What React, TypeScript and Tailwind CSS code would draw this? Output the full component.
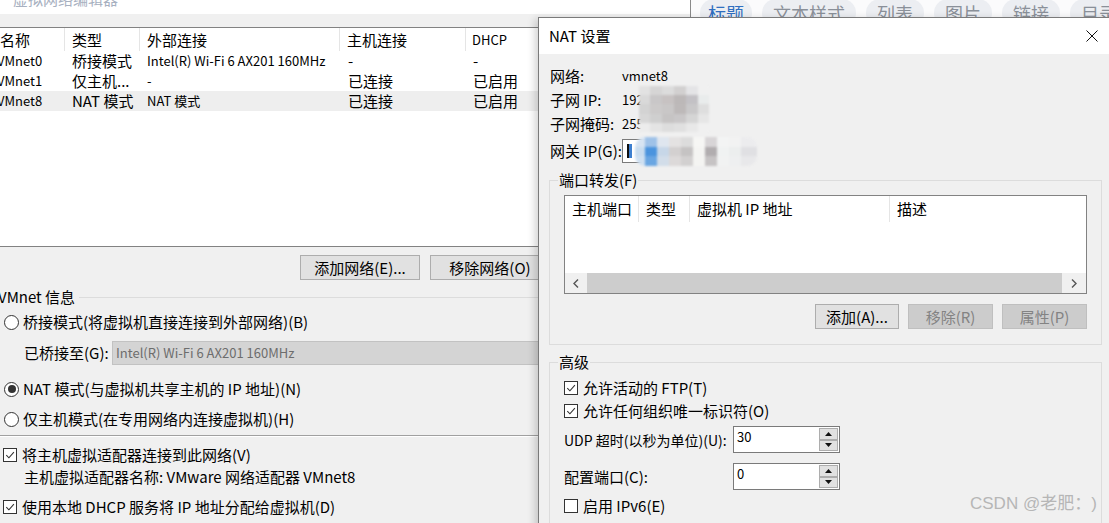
import React from "react";

// small win10-ish controls
const Radio = ({ checked }: { checked?: boolean }) => (
  <span className="w-[15px] h-[15px] rounded-full border border-[#333333] bg-white flex items-center justify-center shrink-0">
    {checked && <span className="w-[8px] h-[8px] rounded-full bg-[#333333]" />}
  </span>
);

const Check = ({ checked }: { checked?: boolean }) => (
  <span className="w-[14px] h-[14px] border border-[#333333] bg-white flex items-center justify-center shrink-0">
    {checked && (
      <svg width="10" height="10" viewBox="0 0 10 10">
        <path d="M1.3 5.2 L3.9 7.8 L8.9 2.2" fill="none" stroke="#333" strokeWidth="1.1" />
      </svg>
    )}
  </span>
);

const WinButton = ({
  children,
  disabled,
  className = "",
}: {
  children: React.ReactNode;
  disabled?: boolean;
  className?: string;
}) => (
  <div
    className={`h-[25px] flex items-center justify-center border shrink-0 ${
      disabled ? "bg-[#cccccc] border-[#bfbfbf] text-[#838383]" : "bg-[#e1e1e1] border-[#adadad]"
    } ${className}`}
  >
    {children}
  </div>
);

const Spin = ({ value }: { value: string }) => (
  <div className="w-[107px] h-[27px] border border-[#7a7a7a] bg-white flex">
    <span className="flex-1 pl-[3px] pt-[2px] text-[13px] leading-[16px]">{value}</span>
    <div className="w-[20px] flex flex-col py-[1px] pr-[1px]">
      <div className="h-[12px] bg-[#e1e1e1] border border-[#adadad] flex items-center justify-center">
        <svg width="7" height="4" viewBox="0 0 7 4">
          <path d="M0 4 L3.5 0 L7 4 Z" fill="#111" />
        </svg>
      </div>
      <div className="h-[12px] bg-[#e1e1e1] border border-[#adadad] flex items-center justify-center">
        <svg width="7" height="4" viewBox="0 0 7 4">
          <path d="M0 0 L3.5 4 L7 0 Z" fill="#111" />
        </svg>
      </div>
    </div>
  </div>
);

const networks = [
  { name: "VMnet0", type: "桥接模式", ext: "Intel(R) Wi-Fi 6 AX201 160MHz", host: "-", dhcp: "-" },
  { name: "VMnet1", type: "仅主机...", ext: "-", host: "已连接", dhcp: "已启用" },
  { name: "VMnet8", type: "NAT 模式", ext: "NAT 模式", host: "已连接", dhcp: "已启用", selected: true },
];

const colW = ["w-[71px]", "w-[75px]", "w-[200px]", "w-[126px]", "w-[120px]"];

const LeftWindow = () => (
  <div className="w-[699px] -ml-[8px] shrink-0 h-full flex flex-col bg-[#f0f0f0] border-r border-[#8a8a8a]">
    <div className="h-[14px] bg-white overflow-hidden">
      <div className="-mt-[10px] pl-[21px] text-[15px] leading-[18px] text-[#a7b0c0]">虚拟网络编辑器</div>
    </div>
    <div className="h-[13px]" />

    {/* network list */}
    <div className="h-[220px] bg-white border-y border-[#828282] pl-[2px]">
      <div className="flex h-[23px]">
        {["名称", "类型", "外部连接", "主机连接", "DHCP"].map((h, i) => (
          <div
            key={h}
            className={`${colW[i]} flex items-center border-r border-[#e5e5e5] ${
              i === 0 ? "pl-[6px]" : i === 4 ? "pl-[6px] text-[13px]" : "pl-[7px]"
            }`}
          >
            {h}
          </div>
        ))}
      </div>
      {networks.map((n) => (
        <div key={n.name} className={`flex h-[20px] items-center ${n.selected ? "bg-[#eeeeee]" : ""}`}>
          <div className={`${colW[0]} pl-[3px] text-[13px]`}>{n.name}</div>
          <div className={`${colW[1]} pl-[7px]`}>{n.type}</div>
          <div className={`${colW[2]} pl-[7px] text-[13px] whitespace-nowrap`}>{n.ext}</div>
          <div className={`${colW[3]} pl-[8px]`}>{n.host}</div>
          <div className={`${colW[4]} pl-[7px]`}>{n.dhcp}</div>
        </div>
      ))}
    </div>

    <div className="mt-[8px] flex gap-[10px] pl-[308px]">
      <WinButton className="w-[120px]">添加网络(E)...</WinButton>
      <WinButton className="w-[120px]">移除网络(O)</WinButton>
    </div>

    {/* VMnet info */}
    <div className="mt-[8px] h-[18px] flex items-center">
      <span className="pl-[6px]">VMnet 信息</span>
      <span className="flex-1 h-px bg-[#dcdcdc] ml-[4px]" />
    </div>
    <div className="mt-[6px] h-[20px] flex items-center gap-[4px] pl-[12px]">
      <Radio />
      <span>桥接模式(将虚拟机直接连接到外部网络)(B)</span>
    </div>
    <div className="mt-[9px] h-[24px] flex items-center pl-[32px] pr-[12px]">
      <span className="w-[88px] shrink-0">已桥接至(G):</span>
      <div className="flex-1 h-full bg-[#d4d4d4] border border-[#c2c2c2] flex items-center pl-[3px] text-[13px] text-[#6d6d6d]">
        Intel(R) Wi-Fi 6 AX201 160MHz
      </div>
    </div>
    <div className="mt-[14px] h-[20px] flex items-center gap-[4px] pl-[12px]">
      <Radio checked />
      <span>NAT 模式(与虚拟机共享主机的 IP 地址)(N)</span>
    </div>
    <div className="mt-[10px] h-[20px] flex items-center gap-[4px] pl-[12px]">
      <Radio />
      <span>仅主机模式(在专用网络内连接虚拟机)(H)</span>
    </div>
    <div className="mt-[6px] h-px bg-[#a0a0a0] border-b border-white box-content" />
    <div className="mt-[8px] h-[20px] flex items-center gap-[5px] pl-[11px]">
      <Check checked />
      <span>将主机虚拟适配器连接到此网络(V)</span>
    </div>
    <div className="mt-[2px] h-[20px] flex items-center pl-[32px]">主机虚拟适配器名称: VMware 网络适配器 VMnet8</div>
    <div className="mt-[10px] h-[20px] flex items-center gap-[5px] pl-[11px]">
      <Check checked />
      <span>使用本地 DHCP 服务将 IP 地址分配给虚拟机(D)</span>
    </div>
  </div>
);

const tabs = ["标题", "文本样式", "列表", "图片", "链接", "目录"];

const BrowserStrip = () => (
  <div className="flex-1 h-[17px] overflow-hidden bg-[#fbfbfc] flex gap-[10px] pl-[9px]">
    {tabs.map((t, i) => (
      <div
        key={t}
        className={`-mt-[1px] h-[28px] shrink-0 rounded-full bg-[#eceef2] flex items-center text-[18px] ${
          i === 0 ? "px-[8px] text-[#2f6fc0]" : "px-[11px] text-[#8a9099]"
        }`}
      >
        {t}
      </div>
    ))}
  </div>
);

const Mosaic = ({ cells, cols, className }: { cells: string[]; cols: string; className: string }) => (
  <div className={`absolute grid ${cols} blur-[1px] ${className}`}>
    {cells.map((c, i) => (
      <div key={i} className={c} />
    ))}
  </div>
);

const NatDialog = () => (
  <div className="absolute left-[538px] top-[17px] w-[577px] h-[520px] border border-[#7a7a7a] bg-[#f0f0f0] shadow-[-3px_2px_8px_rgba(0,0,0,0.18)]">
    <div className="h-[36px] bg-white flex items-center justify-between pl-[10px] pr-[16px]">
      <span className="text-[15px]">NAT 设置</span>
      <svg width="12" height="12" viewBox="0 0 12 12">
        <path d="M0.5 0.5 L11.5 11.5 M11.5 0.5 L0.5 11.5" stroke="#111" strokeWidth="1" />
      </svg>
    </div>

    <div className="pl-[11px] pt-[10px]">
      <div className="h-[24px] flex items-center">
        <span className="w-[72px]">网络:</span>
        <span className="text-[13px]">vmnet8</span>
      </div>
      <div className="h-[24px] flex items-center">
        <span className="w-[72px]">子网 IP:</span>
        <span className="text-[13px]">192</span>
      </div>
      <div className="h-[24px] flex items-center">
        <span className="w-[72px]">子网掩码:</span>
        <span className="text-[13px]">255.2</span>
      </div>
      <div className="mt-[3px] h-[24px] flex items-center">
        <span className="w-[72px]">网关 IP(G):</span>
        <div className="w-[125px] h-full bg-white border border-[#7a7a7a] flex items-center pl-[4px]">
          <span className="w-[5px] h-[14px] bg-[#3c7fd0] border-l-2 border-[#111]" />
        </div>
      </div>
    </div>

    {/* port forwarding */}
    <fieldset className="ml-[10px] mt-[8px] w-[553px] border border-[#dcdcdc]">
      <legend className="ml-[8px] px-[1px] leading-[18px]">端口转发(F)</legend>
      <div className="px-[14px] pt-[6px] pb-[15px]">
        <div className="h-[99px] border border-[#828282] bg-white flex flex-col">
          <div className="h-[26px] flex">
            {[
              ["主机端口", "w-[74px]"],
              ["类型", "w-[51px]"],
              ["虚拟机 IP 地址", "w-[200px]"],
              ["描述", "flex-1"],
            ].map(([t, w], i) => (
              <div
                key={t}
                className={`${w} pl-[7px] flex items-center ${i < 3 ? "border-r border-[#e5e5e5]" : ""}`}
              >
                {t}
              </div>
            ))}
          </div>
          <div className="flex-1" />
          <div className="h-[20px] flex">
            <div className="w-[22px] flex items-center justify-center bg-[#f0f0f0]">
              <svg width="6" height="9" viewBox="0 0 6 9">
                <path d="M5 0.5 L1 4.5 L5 8.5" fill="none" stroke="#555" strokeWidth="1.4" />
              </svg>
            </div>
            <div className="flex-1 bg-[#cdcdcd]" />
            <div className="w-[24px] flex items-center justify-center bg-[#f0f0f0]">
              <svg width="6" height="9" viewBox="0 0 6 9">
                <path d="M1 0.5 L5 4.5 L1 8.5" fill="none" stroke="#555" strokeWidth="1.4" />
              </svg>
            </div>
          </div>
        </div>
        <div className="mt-[10px] flex justify-end gap-[9px]">
          <WinButton className="w-[84px]">添加(A)...</WinButton>
          <WinButton disabled className="w-[85px]">移除(R)</WinButton>
          <WinButton disabled className="w-[85px]">属性(P)</WinButton>
        </div>
      </div>
    </fieldset>

    {/* advanced */}
    <fieldset className="ml-[10px] mt-[8px] w-[553px] border border-[#dcdcdc]">
      <legend className="ml-[8px] px-[1px] leading-[18px]">高级</legend>
      <div className="px-[14px] pt-[5px] pb-[12px]">
        <div className="h-[23px] flex items-center gap-[5px]">
          <Check checked />
          <span>允许活动的 FTP(T)</span>
        </div>
        <div className="h-[23px] flex items-center gap-[5px]">
          <Check checked />
          <span>允许任何组织唯一标识符(O)</span>
        </div>
        <div className="mt-[4px] flex items-center">
          <span className="w-[169px] text-[14px]">UDP 超时(以秒为单位)(U):</span>
          <Spin value="30" />
        </div>
        <div className="mt-[10px] flex items-center">
          <span className="w-[169px]">配置端口(C):</span>
          <Spin value="0" />
        </div>
        <div className="mt-[6px] h-[20px] flex items-center gap-[5px]">
          <Check />
          <span>启用 IPv6(E)</span>
        </div>
      </div>
    </fieldset>

    {/* pixelated parts of the screenshot */}
    <Mosaic
      className="left-[100px] top-[68px] w-[70px] h-[46px]"
      cols="grid-cols-[11px_12px_12px_12px_12px_11px]"
      cells={[
        "bg-[#e2e2e2]", "bg-[#d6d5d5]", "bg-[#dcdcdc]", "bg-[#d2d0d0]", "bg-[#e4e4e6]", "bg-[#f0f0f0]",
        "bg-[#d9d9d9]", "bg-[#c9c7c8]", "bg-[#c7c2c2]", "bg-[#bcb8b8]", "bg-[#c3c1c5]", "bg-[#e9ecec]",
        "bg-[#d3d3d3]", "bg-[#cccaca]", "bg-[#c9c7c7]", "bg-[#bdb9b9]", "bg-[#c9c8c9]", "bg-[#dedede]",
        "bg-[#d7d7d7]", "bg-[#cfcfcf]", "bg-[#c6c4c4]", "bg-[#c9c7c8]", "bg-[#d5d5d5]", "bg-[#e6e6e6]",
        "bg-[#ececec]", "bg-[#e4e4e4]", "bg-[#dddddd]", "bg-[#e0e0e0]", "bg-[#e8e8e8]", "bg-[#f0f0f0]",
      ]}
    />
    <Mosaic
      className="left-[96px] top-[119px] w-[122px] h-[29px] rounded-[10px] overflow-hidden"
      cols="grid-cols-[10px_12px_12px_12px_12px_12px_12px_12px_12px_16px]"
      cells={[
        "bg-[#d7e4f2]", "bg-[#9fc2e8]", "bg-[#dfe6ef]", "bg-[#e4e2e2]", "bg-[#dcdcdc]", "bg-[#f6f6f4]", "bg-[#d8d5d7]", "bg-[#f3f4f4]", "bg-[#f2f2f2]", "bg-[#ececee]",
        "bg-[#c8dcef]", "bg-[#4b94de]", "bg-[#c7d7e8]", "bg-[#d3d0d0]", "bg-[#c5c3c3]", "bg-[#f4f4f2]", "bg-[#b1adaf]", "bg-[#f0f2f2]", "bg-[#eceeee]", "bg-[#e0e0e3]",
        "bg-[#cfe0f1]", "bg-[#6aa6e2]", "bg-[#d2dde9]", "bg-[#dcd9d9]", "bg-[#d2d0d0]", "bg-[#f4f4f2]", "bg-[#c6c3c4]", "bg-[#f1f2f2]", "bg-[#eeeff0]", "bg-[#e8e8ea]",
      ]}
    />

    <div className="absolute left-[431px] top-[475px] text-[17px] leading-[22px] text-[#b6b6b6] [text-spacing-trim:space-all] font-['Liberation_Sans','Noto_Sans_CJK_SC',sans-serif]">
      CSDN @老肥：)
    </div>
  </div>
);

export default function App() {
  return (
    <div className="relative w-[1109px] h-[523px] overflow-hidden flex items-start bg-[#f0f0f0] text-black text-[15px] leading-[18px] font-['Noto_Sans_CJK_SC',sans-serif]">
      <LeftWindow />
      <BrowserStrip />
      <NatDialog />
    </div>
  );
}
